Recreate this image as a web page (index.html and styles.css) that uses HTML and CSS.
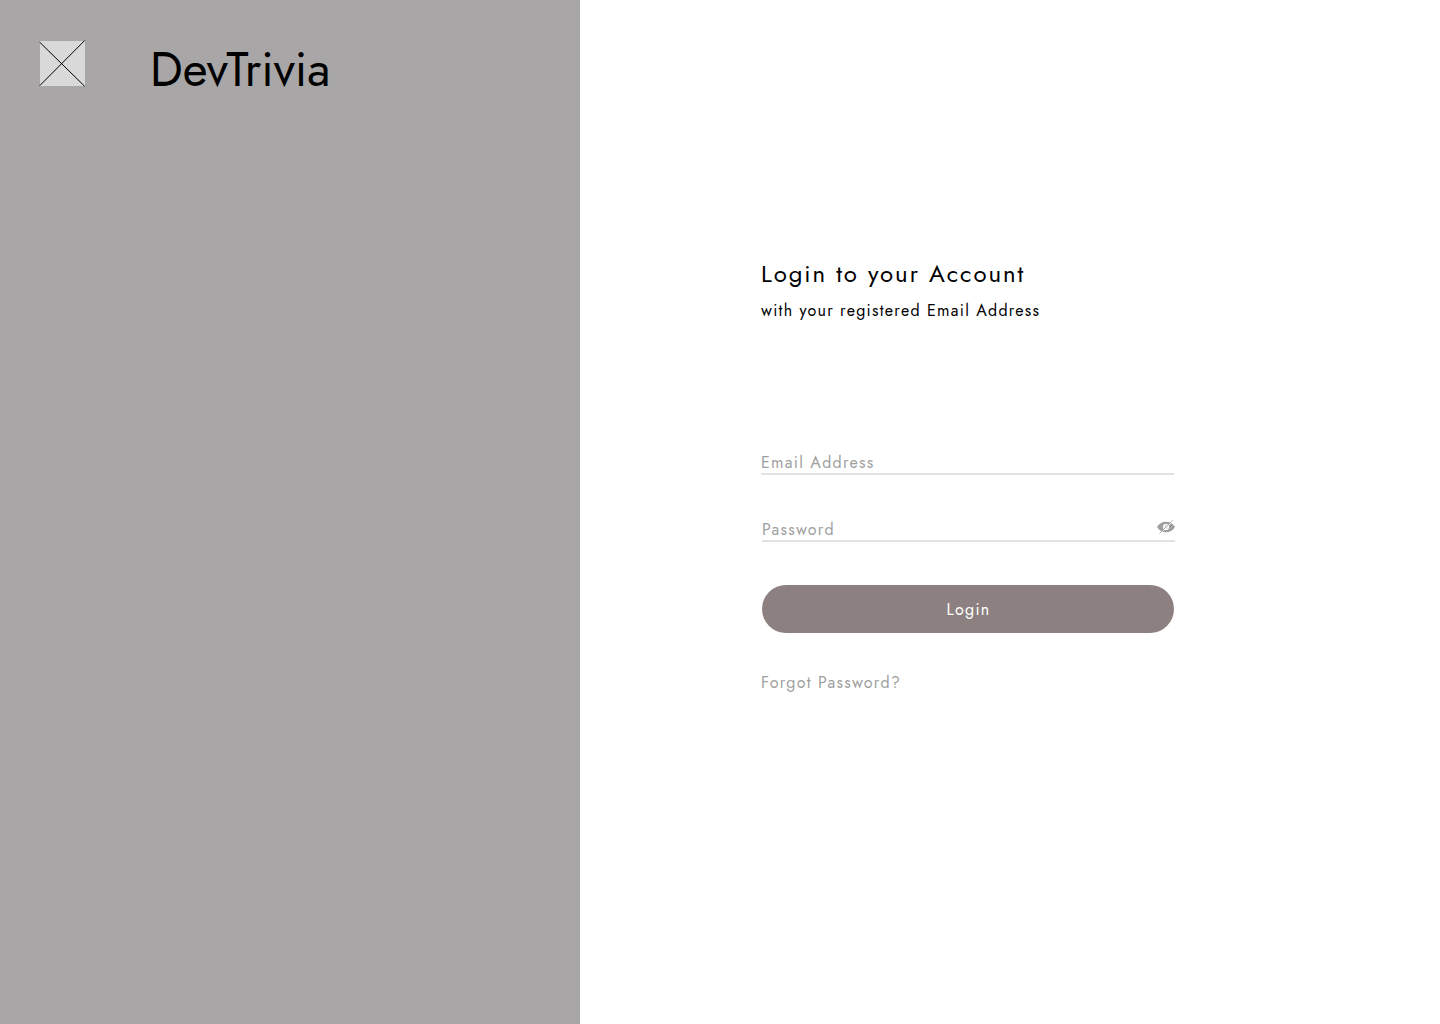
FILE: index.html
```html
<!DOCTYPE html>
<html lang="en">
<head>
<meta charset="utf-8">
<title>DevTrivia</title>
<link rel="stylesheet" href="styles.css">
</head>
<body>
<div class="page">
  <aside class="side">
    <svg class="logo" width="47" height="48" viewBox="0 0 47 48">
      <path d="M1 2h45v45H1z" fill="#d9d9d9"/>
      <path d="M.7 3.200 45.700 47.300M.7 46.700 45.700 1.500" stroke="#000" fill="none"/>
    </svg>
    <span class="brand">DevTrivia</span>
  </aside>
  <main class="main">
    <h1 class="title">Login to your Account</h1>
    <p class="subtitle">with your registered Email Address</p>
    <form class="form">
      <div class="field"><span class="label">Email Address</span></div>
      <div class="field shifted">
        <span class="label">Password</span>
        <svg class="eye" width="20" height="16" viewBox="0 0 20 16">
          <path d="M1 8C3 4.400 6.300 2.700 10 2.700S17 4.400 19 8C17 11.600 13.700 13.300 10 13.300S3 11.600 1 8z" fill="#a09f9f"/>
          <circle cx="10" cy="8" r="3.100" fill="#fff"/>
          <circle cx="10" cy="8" r="2" fill="#dedede"/>
          <path d="M4.300 14.500 17.300 1.500" stroke="#fff" stroke-width="1"/>
          <path d="M3.500 14.500 16.800 1.200" stroke="#a09f9f" stroke-width=".8"/>
        </svg>
      </div>
      <button class="login" type="button">Login</button>
      <a class="forgot">Forgot Password?</a>
    </form>
  </main>
</div>
</body>
</html>
```
FILE: styles.css
```css
* { box-sizing: border-box; }
body { margin: 0; font-family: Jost, Lato, sans-serif; color: #000; background: #fff; }
.page { display: flex; width: 1440px; height: 1024px; }
.side { display: flex; align-items: flex-start; gap: 64px; width: 580px; padding: 39px 0 0 39px; background: #a8a6a6; }
.logo { flex: none; }
.brand { font-size: 48px; line-height: 62px; }
.main { flex: 1; padding: 260px 0 0 181px; }
.title { margin: 0; font-size: 24px; line-height: 28px; font-weight: 400; letter-spacing: 0.08em; white-space: nowrap; }
.subtitle { margin: 13px 0 0; font-size: 16px; line-height: 20px; letter-spacing: 0.08em; white-space: nowrap; }
.form { display: flex; flex-direction: column; align-items: flex-start; margin-top: 130px; font-size: 16px; line-height: 20px; letter-spacing: 0.08em; }
.field { display: flex; justify-content: space-between; width: 413px; height: 24px; padding-top: 2px; border-bottom: 2px solid #e2e2e2; color: #a09f9f; }
.shifted { margin: 43px 0 0 1px; }
.eye { flex: none; margin: -1px -1px 0 0; }
.login { width: 412px; height: 48px; margin: 43px 0 0 1px; padding: 2px 0 0 1px; border: 0; border-radius: 24px; background: #8c8180; color: #fff; font: inherit; letter-spacing: 0.08em; }
.forgot { margin-top: 40px; color: #a09f9f; }
```
